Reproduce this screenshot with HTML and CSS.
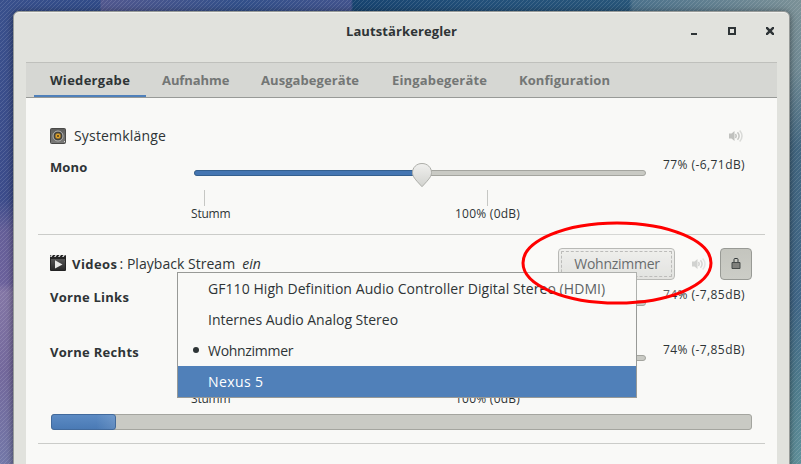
FILE: index.html
```
<!DOCTYPE html>
<html lang="de">
<head>
<meta charset="utf-8">
<title>Lautstärkeregler</title>
<link rel="stylesheet" href="styles.css">
</head>
<body>
<svg class="wallpaper" width="801" height="464" aria-hidden="true">
  <defs>
    <linearGradient id="left" x1="0" y1="0" x2="0" y2="1">
      <stop offset="0" stop-color="#39508c"/><stop offset=".43" stop-color="#3c4c8b"/><stop offset=".5" stop-color="#655f98"/><stop offset=".61" stop-color="#6b619c"/><stop offset=".63" stop-color="#8477a6"/><stop offset=".8" stop-color="#73689c"/><stop offset="1" stop-color="#7378a8"/>
    </linearGradient>
    <linearGradient id="right" x1="0" y1="0" x2="0" y2="1">
      <stop offset="0" stop-color="#7b9197"/><stop offset=".15" stop-color="#708a94"/><stop offset=".32" stop-color="#426680"/><stop offset=".65" stop-color="#406687"/><stop offset=".83" stop-color="#4f7c8d"/><stop offset="1" stop-color="#60909a"/>
    </linearGradient>
    <linearGradient id="top" x1="0" y1="0" x2="1" y2="0">
      <stop offset="0" stop-color="#39508c"/><stop offset=".125" stop-color="#304b88"/><stop offset=".126" stop-color="#52588f"/><stop offset=".3" stop-color="#32508a"/><stop offset=".438" stop-color="#42538d"/><stop offset=".441" stop-color="#174470"/><stop offset=".6" stop-color="#22507a"/><stop offset=".785" stop-color="#275579"/><stop offset=".79" stop-color="#4b718b"/><stop offset="1" stop-color="#7b9197"/>
    </linearGradient>
    <pattern id="weave" width="4" height="4" patternUnits="userSpaceOnUse">
      <path d="M-1 1 1-1M0 4 4 0M3 5 5 3" stroke="#fff" stroke-opacity=".12" stroke-width="1"/>
    </pattern>
  </defs>
  <rect width="400" height="464" fill="url(#left)"/>
  <rect x="400" width="401" height="464" fill="url(#right)"/>
  <rect width="801" height="14" fill="url(#top)"/>
  <rect width="801" height="464" fill="url(#weave)"/>
</svg>

<main class="window">
  <header class="titlebar">
    <h1 class="title">Lautstärkeregler</h1>
    <div class="controls">
      <svg width="16" height="16" viewBox="0 0 16 16"><path d="M5 10h6v2H5z"/></svg>
      <svg width="16" height="16" viewBox="0 0 16 16"><path fill-rule="evenodd" d="M4 4h8v8H4zM6 6v4h4V6z"/></svg>
      <svg width="16" height="16" viewBox="0 0 16 16"><path d="M4 4h1.700L8 6.200 10.300 4H12v1.700L9.800 8 12 10.300V12h-1.700L8 9.800 5.700 12H4v-1.700L6.200 8 4 5.700z"/></svg>
    </div>
  </header>

  <nav class="tabs">
    <span class="tab tab-playback active">Wiedergabe</span>
    <span class="tab tab-record">Aufnahme</span>
    <span class="tab tab-output">Ausgabegeräte</span>
    <span class="tab tab-input">Eingabegeräte</span>
    <span class="tab tab-config">Konfiguration</span>
  </nav>

  <section class="panel">
    <article class="stream system">
      <div class="head">
        <svg class="app-icon" width="16" height="16" viewBox="0 0 16 16">
          <defs><linearGradient id="box" x1="0" y1="0" x2="0" y2="1"><stop offset="0" stop-color="#5e5e5c"/><stop offset="1" stop-color="#7b7b79"/></linearGradient></defs>
          <rect x=".5" y=".5" width="15" height="15" rx="1" fill="url(#box)" stroke="#4a4a48"/>
          <circle cx="8" cy="8" r="5" fill="#3f3f3d" stroke="#b9b9b5"/>
          <circle cx="8" cy="8" r="2.800" fill="#e0a32c" stroke="#77602f" stroke-width=".6"/>
          <circle cx="8" cy="8" r="1" fill="#4a3a1c"/>
          <path d="M14 13h1v1h-1z" fill="#ddd"/>
        </svg>
        <span class="name sys-name">Systemklänge</span>
        <svg class="mute" width="16" height="16" viewBox="0 0 16 16"><path d="M1 5.500h2.500L6.500 3v10L3.500 10.500H1z" fill="#c0c1be"/><g fill="none" stroke="#c0c1be" stroke-width="1.500"><path d="M7.500 6q1.500 2 0 4"/><path d="M9.500 4.200q3.200 3.800 0 7.600" opacity=".9"/><path d="M11.700 2.500q4.600 5.500 0 11" opacity=".55"/></g></svg>
      </div>
      <div class="channel mono">
        <span class="label l-mono">Mono</span>
        <div class="scale">
          <div class="trough"><i class="fill"></i></div>
          <svg class="knob" width="22" height="26" viewBox="0 0 22 26"><defs><linearGradient id="kg" x1="0" y1="0" x2="0" y2="1"><stop offset="0" stop-color="#f0f0ee"/><stop offset="1" stop-color="#d2d3cf"/></linearGradient></defs><path d="M11 1.500C5.500 1.500 1.500 5.600 1.500 10.500c0 4 2.300 6.500 9.500 14.200 7.200-7.700 9.500-10.200 9.500-14.200 0-4.900-4-9-9.500-9z" fill="url(#kg)" stroke="#adaea9"/></svg>
        </div>
        <span class="value">77% (-6,71dB)</span>
      </div>
      <div class="marks"><span class="mark-min">Stumm</span><span class="mark-full">100% (0dB)</span></div>
    </article>

    <article class="stream video">
      <div class="head">
        <svg class="app-icon clapper" width="16" height="16" viewBox="0 0 16 16">
          <defs><linearGradient id="clap" x1="0" y1="0" x2="0" y2="1"><stop offset="0" stop-color="#555"/><stop offset="1" stop-color="#292929"/></linearGradient></defs>
          <rect width="16" height="16" rx="1" fill="#242424"/><rect x="1" y="4" width="14" height="11" fill="url(#clap)"/>
          <path d="m0 2 1.500-2H3L1.500 2zM4 2l1.500-2H7L5.500 2zM8 2l1.500-2H11L9.500 2zM12 2l1.500-2H15l-1.500 2z" fill="#eee"/>
          <path d="M5 5.200v8.300L12.500 9.400z" fill="#e8e8e6"/>
        </svg>
        <b class="name app-name">Videos</b><span class="stream-name">: Playback Stream</span><em class="on">ein</em>
        <button class="device">Wohnzimmer</button>
        <svg class="mute" width="16" height="16" viewBox="0 0 16 16"><path d="M1 5.500h2.500L6.500 3v10L3.500 10.500H1z" fill="#c0c1be"/><g fill="none" stroke="#c0c1be" stroke-width="1.500"><path d="M7.500 6q1.500 2 0 4"/><path d="M9.500 4.200q3.200 3.800 0 7.600" opacity=".9"/><path d="M11.700 2.500q4.600 5.500 0 11" opacity=".55"/></g></svg>
        <button class="lock" aria-label="Kanäle sperren"><svg width="16" height="16" viewBox="0 0 16 16"><path d="M6 6V3.500q0-1 1-1h2q1 0 1 1V6" fill="none" stroke="#343a3b"/><path d="M4 6.500h8v6H4z" fill="#7f807c" stroke="#454a49"/></svg></button>
      </div>
      <div class="channel left">
        <span class="label l-left">Vorne Links</span>
        <div class="scale"><div class="trough"><i class="fill"></i></div></div>
        <span class="value">74% (-7,85dB)</span>
      </div>
      <div class="channel right">
        <span class="label l-right">Vorne Rechts</span>
        <div class="scale"><div class="trough"><i class="fill"></i></div></div>
        <span class="value">74% (-7,85dB)</span>
      </div>
      <div class="marks"><span class="mark-min">Stumm</span><span class="mark-full">100% (0dB)</span></div>
      <div class="level"><i class="level-fill"></i></div>
    </article>
  </section>
</main>

<ul class="menu">
  <li class="m-hdmi">GF110 High Definition Audio Controller Digital Stereo (HDMI)</li>
  <li class="m-internal">Internes Audio Analog Stereo</li>
  <li class="m-room checked">Wohnzimmer</li>
  <li class="m-nexus selected">Nexus 5</li>
</ul>

<svg class="highlight" width="196" height="88" viewBox="0 0 196 88"><ellipse cx="98" cy="44" rx="94" ry="40" fill="#fff" fill-opacity=".22" stroke="#f00" stroke-width="3"/></svg>
</body>
</html>
```
FILE: styles.css
```
* { box-sizing: border-box; }
body {
  margin: 0;
  width: 801px;
  height: 464px;
  overflow: hidden;
  position: relative;
  color: #2e3436;
  font: 14px/20px "Open Sans", "Noto Sans", sans-serif;
  white-space: nowrap;
}
.wallpaper { position: absolute; inset: 0; }

.window {
  position: relative;
  margin: 11px 0 0 13px;
  width: 777px;
  height: 470px;
  padding: 0 12px;
  border: 1px solid #969a98;
  border-radius: 6px 6px 0 0;
  background: #e1e2dd;
  box-shadow: inset 0 1px #f0f0ed, 0 1px 7px rgba(0, 0, 0, .5);
}
.titlebar { position: relative; height: 50px; }
.title {
  margin: 0;
  padding-top: 9px;
  text-align: center;
  font: bold 13px/20px "Open Sans", sans-serif;
  letter-spacing: .1px;
}
.controls {
  position: absolute;
  right: -1px;
  top: 11px;
  display: flex;
  gap: 22px;
  fill: #2e3436;
}
.controls svg { display: block; }

.tabs {
  display: flex;
  height: 36px;
  padding-left: 8px;
  background: #d6d7d3;
  border-top: 1px solid #bfc0bc;
  border-bottom: 1px solid #989a97;
}
.tab {
  padding: 7px 0 0 16px;
  color: #737675;
  font-weight: bold;
  font-size: 13px;
}
.tab-playback { width: 112px; letter-spacing: .3px; }
.tab-record { width: 99px; letter-spacing: -.08px; }
.tab-output { width: 131px; letter-spacing: .07px; }
.tab-input { width: 127px; letter-spacing: .16px; }
.tab-config { letter-spacing: .08px; }
.active { color: #2e3436; box-shadow: inset 0 -2px #4f80ba; }

.panel { height: 372px; padding: 0 12px; background: #f9f9f7; }
.stream { border-bottom: 1px solid #cbccc9; padding: 0 12px; }
.system { height: 137px; padding-top: 28px; }
.video { height: 209px; padding-top: 13px; }

.head { display: flex; align-items: center; }
.system .head { height: 20px; }
.video .head { height: 32px; }
.clapper { margin-top: -2px; }
.name { margin-left: 8px; }
.sys-name { letter-spacing: .18px; }
.app-name { margin-left: 6px; font-size: 13px; letter-spacing: .45px; }
.stream-name { margin-left: 2px; letter-spacing: .03px; }
.on { margin-left: 7px; letter-spacing: .1px; }
.system .mute { margin-left: auto; margin-right: 9px; }
.device {
  width: 117px;
  height: 32px;
  margin-left: auto;
  padding: 0 0 0 1px;
  border: 1px solid #a5a6a2;
  border-radius: 4px;
  background: linear-gradient(#ebebe8, #dadbd7);
  color: #3d4345;
  font: 14px/20px "Open Sans", sans-serif;
  letter-spacing: -.28px;
  outline: 1px dashed #aaaaa7;
  outline-offset: -4px;
}
.video .mute { margin-left: 16px; opacity: .9; }
.lock {
  display: grid;
  place-items: center;
  width: 32px;
  height: 32px;
  margin: 0 1px 0 13px;
  padding: 0;
  border: 1px solid #989a95;
  border-radius: 4px;
  background: linear-gradient(#c4c5be, #cccdc7);
}

.channel { display: grid; grid-template-columns: 144px 452px 1fr; height: 32px; }
.mono { margin-top: 11px; }
.video .left { margin-top: 7px; height: 55px; }
.right { height: 33px; }
.label { font-weight: bold; font-size: 13px; }
.l-mono { letter-spacing: .1px; }
.l-left { letter-spacing: .25px; }
.l-right { letter-spacing: .29px; }
.value { margin-top: -2px; padding-left: 17px; font-size: 12px; letter-spacing: .43px; }
.scale { position: relative; padding-top: 13px; }
.trough { height: 6px; border: 1px solid #a4a59f; border-radius: 3px; background: #c9cac4; }
.fill { display: block; height: 6px; width: 334px; margin: -1px; border: 1px solid #35608f; border-radius: 3px 0 0 3px; background: #4576b2; }
.mono .fill { width: 228px; }
.knob { position: absolute; left: 217px; top: 5px; }

.marks { display: flex; margin: 0 0 0 141px; font-size: 12px; line-height: 16px; }
.mark-min { width: 264px; letter-spacing: -.2px; }
.mark-full { letter-spacing: .25px; }
.marks span::before { content: ""; display: block; width: 1px; height: 16px; background: #c6c7c4; }
.mark-min::before { margin-left: 13px; }
.mark-full::before { margin-left: 32px; }
.system .marks { margin-top: 1px; }
.level {
  height: 16px;
  margin: 7px 1px 0;
  border: 1px solid #a4a59f;
  border-radius: 3px;
  background: #c9cac4;
}
.level-fill {
  display: block;
  width: 65px;
  height: 16px;
  margin: -1px;
  border: 1px solid #426a9c;
  border-radius: 3px;
  background: linear-gradient(90deg, transparent 70%, rgba(255, 255, 255, .12)), linear-gradient(#5c8bc4, #4a7ab5);
}

.menu {
  position: absolute;
  left: 177px;
  top: 272px;
  width: 460px;
  margin: 0;
  padding: 0;
  list-style: none;
  border: 1px solid #989a97;
  background: #f9f9f7;
}
.menu li { position: relative; height: 31px; padding: 6px 0 0 30px; }
.m-hdmi { letter-spacing: .065px; }
.m-internal { letter-spacing: -.01px; }
.m-room { letter-spacing: -.3px; }
.m-nexus { letter-spacing: .4px; }
.checked::before {
  content: "";
  position: absolute;
  left: 15px;
  top: 12px;
  width: 6px;
  height: 6px;
  border-radius: 50%;
  background: #2e3436;
}
.menu .selected { color: #fff; background: #5080b9; }
.highlight { position: absolute; left: 518.5px; top: 219px; }
```
